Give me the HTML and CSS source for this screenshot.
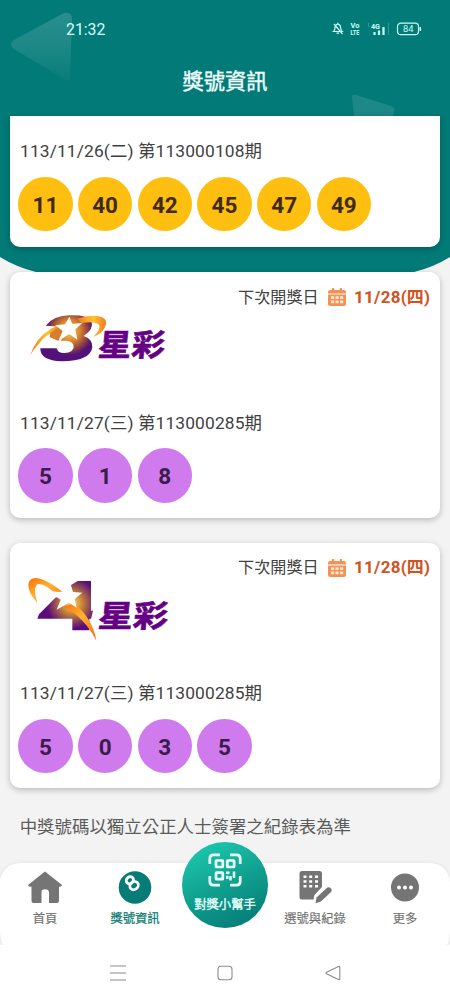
FILE: index.html
```
<!DOCTYPE html>
<html lang="zh-Hant">
<head>
<meta charset="utf-8">
<title>獎號資訊</title>
<link rel="stylesheet" href="styles.css">
</head>
<body>
<div class="phone">
  <svg class="backdrop" width="450" height="280" viewBox="0 0 450 280">
    <defs>
      <linearGradient id="tri" x1="0" y1="0" x2="0" y2="1"><stop offset="0" stop-color="#fff" stop-opacity=".15"/><stop offset=".5" stop-color="#fff" stop-opacity=".11"/><stop offset="1" stop-color="#fff" stop-opacity=".02"/></linearGradient>
    </defs>
    <path d="M0 0H450V257Q434 267 414 272Q385 280 350 280H100Q65 280 36 272Q16 267 0 257Z" fill="#027a77"/>
    <path d="M14 40L62 14Q72 10 72 20L70 77Q69 82 64 79L14 49Q8 44 14 40Z" fill="url(#tri)"/>
    <path d="M352 97Q352 94 356 95L391 106Q396 108 394 112L393 116H354Z" fill="#fff" fill-opacity=".11"/>
  </svg>

  <header class="top">
    <div class="status">
      <span class="clock">21:32</span>
      <svg class="status-icons" width="92" height="18" viewBox="0 0 92 18" fill="none" stroke="#c9fffa" stroke-width="1.2">
        <path d="M3.500 11.500Q5 10 5 7.500Q5.200 4.500 7.800 4.200Q10.500 4.500 10.600 7.500Q10.600 10 12.200 11.500ZM6.500 13.200H9.200M7.800 4.200V2.800M4 4L12.500 14"/>
        <text class="tiny" x="20.400" y="8" textLength="9" lengthAdjust="spacingAndGlyphs">Vo</text>
        <text class="tiny" x="20.400" y="15.400" textLength="9" lengthAdjust="spacingAndGlyphs">LTE</text>
        <text class="tiny" x="41" y="8.500" textLength="9" lengthAdjust="spacingAndGlyphs">4G</text>
        <path d="M44.500 12V15M49 10.500V15M53.500 7V15" stroke-width="2.200"/>
        <path d="M38.500 3V7M58.500 3V15" stroke-opacity=".3" stroke-width=".8"/>
        <rect x="67.500" y="3.200" width="21" height="11.400" rx="3.400"/>
        <path d="M90.300 7V11" stroke-width="1.600"/>
        <text class="battery" x="73" y="12" textLength="10.500" lengthAdjust="spacingAndGlyphs">84</text>
      </svg>
    </div>
    <h1 class="title">獎號資訊</h1>
  </header>

  <main class="draws">
    <section class="card card-cut">
      <p class="issue">113/11/26(二) 第113000108期</p>
      <div class="balls gold"><b>11</b><b>40</b><b>42</b><b>45</b><b>47</b><b>49</b></div>
    </section>

    <section class="card">
      <div class="next"><span>下次開獎日</span>
        <svg class="cal" width="18" height="18" viewBox="0 0 18 18"><path d="M4 0h2.200v2h5.600V0H14v2h2q2 0 2 2v1.400H0V4q0-2 2-2h2ZM0 6.500h18V16q0 2-2 2H2q-2 0-2-2Z" fill="#f19257"/><path d="M3 8.300h3.200v2.700H3zM7.500 8.300h3.200v2.700H7.500zM12 8.300h3.200v2.700H12zM3 12.600h3.200v2.700H3zM7.500 12.600h3.200v2.700H7.500zM12 12.600h3.200v2.700H12z" fill="#ffe6cc"/></svg>
        <strong>11/28(四)</strong></div>
      <div class="brand brand-three">
        <svg width="142" height="52" viewBox="80 65 426 156">
          <defs>
            <radialGradient id="g3" gradientUnits="userSpaceOnUse" cx="207" cy="122" r="72"><stop offset="0" stop-color="#ffd25c"/><stop offset=".45" stop-color="#d9832e"/><stop offset=".78" stop-color="#8c3f45"/><stop offset="1" stop-color="#53117a"/></radialGradient>
            <linearGradient id="o3"><stop offset="0" stop-color="#f27a1c"/><stop offset=".55" stop-color="#ffc32e"/><stop offset="1" stop-color="#f47b20"/></linearGradient>
          </defs>
          <path d="M136 106Q158 77 205 75Q260 72 273 92Q282 116 250 137Q277 145 276 171Q271 212 184 213Q119 211 120 174L170 174Q170 188 192 188Q219 187 220 170Q221 154 198 151L182 151L189 128Q216 127 222 112Q224 98 207 98Q192 99 187 109Z" fill="url(#g3)"/>
          <path d="M90 194Q106 143 151 116Q160 109 182 106L178 119Q137 128 113 163Q99 178 90 194Z" fill="url(#o3)"/>
          <path d="M150 128L182 106L190 128L174 152L148 140Z" fill="#d77d2c"/>
          <path d="M231 85Q272 71 304 80Q325 88 313 112Q303 132 279 139Q303 116 296 103Q284 91 243 98Z" fill="url(#o3)"/>
          <path d="M207 79L216 101L246 98L225 117L231 148L207 131L174 152L187 122L165 105L194 102Z" fill="#fff"/>
          <text class="brand-name" transform="translate(291 198) skewX(-6)" textLength="200" lengthAdjust="spacingAndGlyphs">星彩</text>
        </svg>
      </div>
      <p class="issue">113/11/27(三) 第113000285期</p>
      <div class="balls violet"><b>5</b><b>1</b><b>8</b></div>
    </section>

    <section class="card">
      <div class="next"><span>下次開獎日</span>
        <svg class="cal" width="18" height="18" viewBox="0 0 18 18"><path d="M4 0h2.200v2h5.600V0H14v2h2q2 0 2 2v1.400H0V4q0-2 2-2h2ZM0 6.500h18V16q0 2-2 2H2q-2 0-2-2Z" fill="#f19257"/><path d="M3 8.300h3.200v2.700H3zM7.500 8.300h3.200v2.700H7.500zM12 8.300h3.200v2.700H12zM3 12.600h3.200v2.700H3zM7.500 12.600h3.200v2.700H7.500zM12 12.600h3.200v2.700H12z" fill="#ffe6cc"/></svg>
        <strong>11/28(四)</strong></div>
      <div class="brand">
        <svg width="145" height="66.700" viewBox="80 50 435 200">
          <defs>
            <radialGradient id="g4" gradientUnits="userSpaceOnUse" cx="215" cy="132" r="76"><stop offset="0" stop-color="#ffe06a"/><stop offset=".4" stop-color="#c98639"/><stop offset=".75" stop-color="#86405a"/><stop offset="1" stop-color="#5a0c7d"/></radialGradient>
            <linearGradient id="o4" x1="0" y1="0" x2="1" y2="1"><stop offset="0" stop-color="#ff6d0a"/><stop offset=".45" stop-color="#ffb32e"/><stop offset="1" stop-color="#f36b1c"/></linearGradient>
          </defs>
          <path d="M211 78L232 65H272V154H278L272 178H267V213H216V178H111L116 165L165 115L211 96Z" fill="url(#g4)"/>
          <path d="M111 130Q77 94 86 67Q97 48 130 62Q164 77 190 101L157 96Q127 70 111 75Q97 87 111 130Z" fill="url(#o4)"/>
          <path d="M190 142L222 132Q278 180 288 244Q264 197 228 167Q212 153 190 142Z" fill="url(#o4)"/>
          <path d="M146 98L195 97L211 75L218 98L246 100L223 119L229 145L206 130L169 151L181 121Z" fill="#fff"/>
          <text class="brand-name" transform="translate(291 203) skewX(-6)" textLength="210" lengthAdjust="spacingAndGlyphs">星彩</text>
        </svg>
      </div>
      <p class="issue">113/11/27(三) 第113000285期</p>
      <div class="balls violet"><b>5</b><b>0</b><b>3</b><b>5</b></div>
    </section>

    <p class="note">中獎號碼以獨立公正人士簽署之紀錄表為準</p>
  </main>

  <div class="tab-wrap">
    <nav class="tabs">
      <a class="tab"><svg width="34" height="34" viewBox="0 0 34 34"><path d="M17 1.500L34 15Q34 17 31 16.700V30.500Q31 33 28.500 33H21V22Q20.500 19.200 17 19.200T13.500 22V33H5.500Q3.500 33 3.500 31V16.700Q0 17 0 15Z" fill="#757575"/></svg><span>首頁</span></a>
      <a class="tab active"><svg width="34" height="34" viewBox="0 0 34 34"><circle cx="17" cy="17.500" r="16.300" fill="#077b76"/><g fill="none" stroke="#fff" stroke-width="2.800" transform="rotate(-38 14 13)"><ellipse cx="14" cy="9.500" rx="3.800" ry="3.300"/><ellipse cx="14" cy="16.400" rx="4.500" ry="3.800"/></g></svg><span>獎號資訊</span></a>
      <span class="tab-gap"></span>
      <a class="tab"><svg width="34" height="34" viewBox="0 0 34 34"><path d="M4 1H21.500Q24 1 24 3.500V17L16.500 25Q15.500 26.500 15.800 29.500H4Q1.500 29.500 1.500 27V3.500Q1.500 1 4 1Z" fill="#757575"/><path d="M5.500 5.500h3v2.500h-3zM11.200 5.500h3v2.500h-3zM17 5.500h3v2.500h-3zM5.500 10.300h3v2.500h-3zM11.200 10.300h3v2.500h-3zM17 10.300h3v2.500h-3zM5.500 15h3v2.500h-3zM11.200 15h3v2.500h-3zM17 15h3v2.500h-3z" fill="#fff"/><path d="M18.500 27.500L29 17.700Q31 16.500 33 18.500Q34.300 20.500 33 22L23 31.500L17.500 33.200Z" fill="#757575"/></svg><span>選號與紀錄</span></a>
      <a class="tab"><svg width="34" height="34" viewBox="0 0 34 34"><circle cx="17" cy="17.500" r="14" fill="#757575"/><g fill="#fff"><circle cx="11" cy="17.500" r="2"/><circle cx="17" cy="17.500" r="2"/><circle cx="23" cy="17.500" r="2"/></g></svg><span>更多</span></a>
    </nav>
    <a class="scan">
      <svg width="34" height="34" viewBox="0 0 34 34" fill="none" stroke="#e6fffb" stroke-width="2.700"><path d="M1.800 11V5.500Q1.800 1.800 5.500 1.800H12M22 1.800H28.500Q32.200 1.800 32.200 5.500V11M1.800 23V28.500Q1.800 32.200 5.500 32.200H12M22 32.200H28.500Q32.200 32.200 32.200 28.500V23"/><rect x="8" y="7.500" width="6.800" height="6.500" rx=".5"/><rect x="19.300" y="7.500" width="6.800" height="6.500" rx=".5"/><rect x="8" y="19.700" width="6.800" height="6.500" rx=".5"/><path d="M18 19.700H21.500M26 18.500V25M19.300 22.800V26M22.500 23V27.500" stroke-width="2.500"/></svg>
      <span>對獎小幫手</span>
    </a>
  </div>

  <footer class="system">
    <svg width="16" height="16" viewBox="0 0 16 16"><path d="M0 1H16M0 8H16M0 15H16"/></svg>
    <svg width="16" height="16" viewBox="0 0 16 16"><rect x="1" y="1.200" width="14" height="13.600" rx="3"/></svg>
    <svg width="16" height="16" viewBox="0 0 16 16"><path d="M14.800 2.200V13.800Q14.800 15 13.500 14.500L1.500 8.800Q.5 8 1.500 7.200L13.500 1.500Q14.800 1 14.800 2.200Z"/></svg>
  </footer>
</div>
</body>
</html>
```

FILE: styles.css
```
* { box-sizing: border-box; }

body {
  margin: 0;
  font-family: Roboto, "Noto Sans CJK TC", sans-serif;
  color: #414141;
}

p, h1 { margin: 0; white-space: nowrap; }

.phone {
  position: relative;
  width: 450px;
  height: 1000px;
  overflow: hidden;
  display: flex;
  flex-direction: column;
  background: #f3f3f3;
}

.backdrop { position: absolute; left: 0; top: 0; }

.top {
  position: relative;
  height: 116px;
  flex: none;
  padding-top: 20px;
  color: #f0fffd;
}

.status {
  display: flex;
  justify-content: space-between;
  align-items: center;
  height: 18px;
  padding: 0 28px 0 66px;
}

.clock { font-size: 15.800px; color: #d6fffa; }

.status-icons text { fill: #c9fffa; stroke: none; font-weight: 700; }
.status-icons .tiny { font-size: 7.500px; }
.status-icons .battery { font-size: 9px; font-weight: 400; }

.title {
  margin-top: 28px;
  text-align: center;
  font-size: 21.200px;
  line-height: 32px;
  font-weight: 400;
  -webkit-text-stroke: .4px #f0fffd;
}

.draws {
  position: relative;
  height: 747px;
  flex: none;
  display: flex;
  flex-direction: column;
  gap: 25.200px;
  padding: 0 9.700px;
}

.card {
  height: 245.500px;
  flex: none;
  display: flex;
  flex-direction: column;
  background: #fff;
  border-radius: 10px;
  box-shadow: 0 2px 6px rgba(0, 0, 0, .24);
}

.card-cut { height: 131px; padding-top: 18px; border-radius: 0 0 10px 10px; }

.next {
  display: flex;
  justify-content: flex-end;
  align-items: center;
  height: 17px;
  margin-top: 16.500px;
  padding-right: 10px;
  font-size: 16.100px;
  line-height: 17px;
}

.next strong { color: #d2531d; font-size: 17px; letter-spacing: .25px; }
.cal { margin: 0 8.500px 0 9px; }

.brand { height: 100px; padding-left: 17px; }
.brand-three { padding-top: 6px; }
.brand svg { display: block; }

.brand-name {
  font-family: "Noto Sans CJK TC", sans-serif;
  font-size: 92px;
  font-weight: 700;
  fill: #650084;
  stroke: #650084;
  stroke-width: 2;
}

.issue {
  padding-left: 10.300px;
  font-size: 17.400px;
  line-height: 34px;
  letter-spacing: .12px;
}

.balls { display: flex; gap: 5.200px; margin-top: 8.500px; padding-left: 8.500px; }

.balls b {
  width: 54.500px;
  height: 54.500px;
  border-radius: 50%;
  text-align: center;
  font-size: 22.500px;
  line-height: 57px;
}

.gold b { background: #ffbf10; color: #3f2b18; }
.violet b { background: #cf7bee; color: #3b1c4b; }

.note {
  padding-left: 10px;
  font-size: 17.450px;
  line-height: 26px;
  color: #5b5b5b;
}

.tab-wrap { position: relative; height: 82px; flex: none; background: #f3f3f3; }

.tabs {
  height: 82px;
  display: grid;
  grid-template-columns: 90px 90px 90px 90px 90px;
  background: #fff;
  border-radius: 20px 20px 4px 4px / 20px 20px 16px 16px;
  box-shadow: 0 0 4px rgba(0, 0, 0, .08);
}

.tab {
  display: flex;
  flex-direction: column;
  align-items: center;
  padding-top: 7px;
  font-size: 12.300px;
  line-height: 18px;
  color: #707070;
  white-space: nowrap;
}

.tab span { margin-top: 6px; -webkit-text-stroke: .15px currentColor; }
.tab.active { color: #0b7a70; }
.tab.active span { -webkit-text-stroke-width: .25px; }

.scan {
  position: absolute;
  left: 182px;
  top: -21px;
  width: 86px;
  height: 86px;
  border-radius: 50%;
  display: flex;
  flex-direction: column;
  align-items: center;
  padding-top: 11px;
  background: linear-gradient(155deg, #1dcbb0 5%, #10a08f 50%, #047d78 90%);
  color: #e6fffb;
  font-size: 12.300px;
  line-height: 18px;
  white-space: nowrap;
}

.scan span { margin-top: 8.500px; -webkit-text-stroke: .35px currentColor; }

.system {
  position: relative;
  height: 55px;
  flex: none;
  display: flex;
  justify-content: center;
  align-items: center;
  gap: 91.500px;
  background: #fff;
}

.system svg { fill: none; stroke: #8c8c8c; stroke-width: 1.1; }
```
